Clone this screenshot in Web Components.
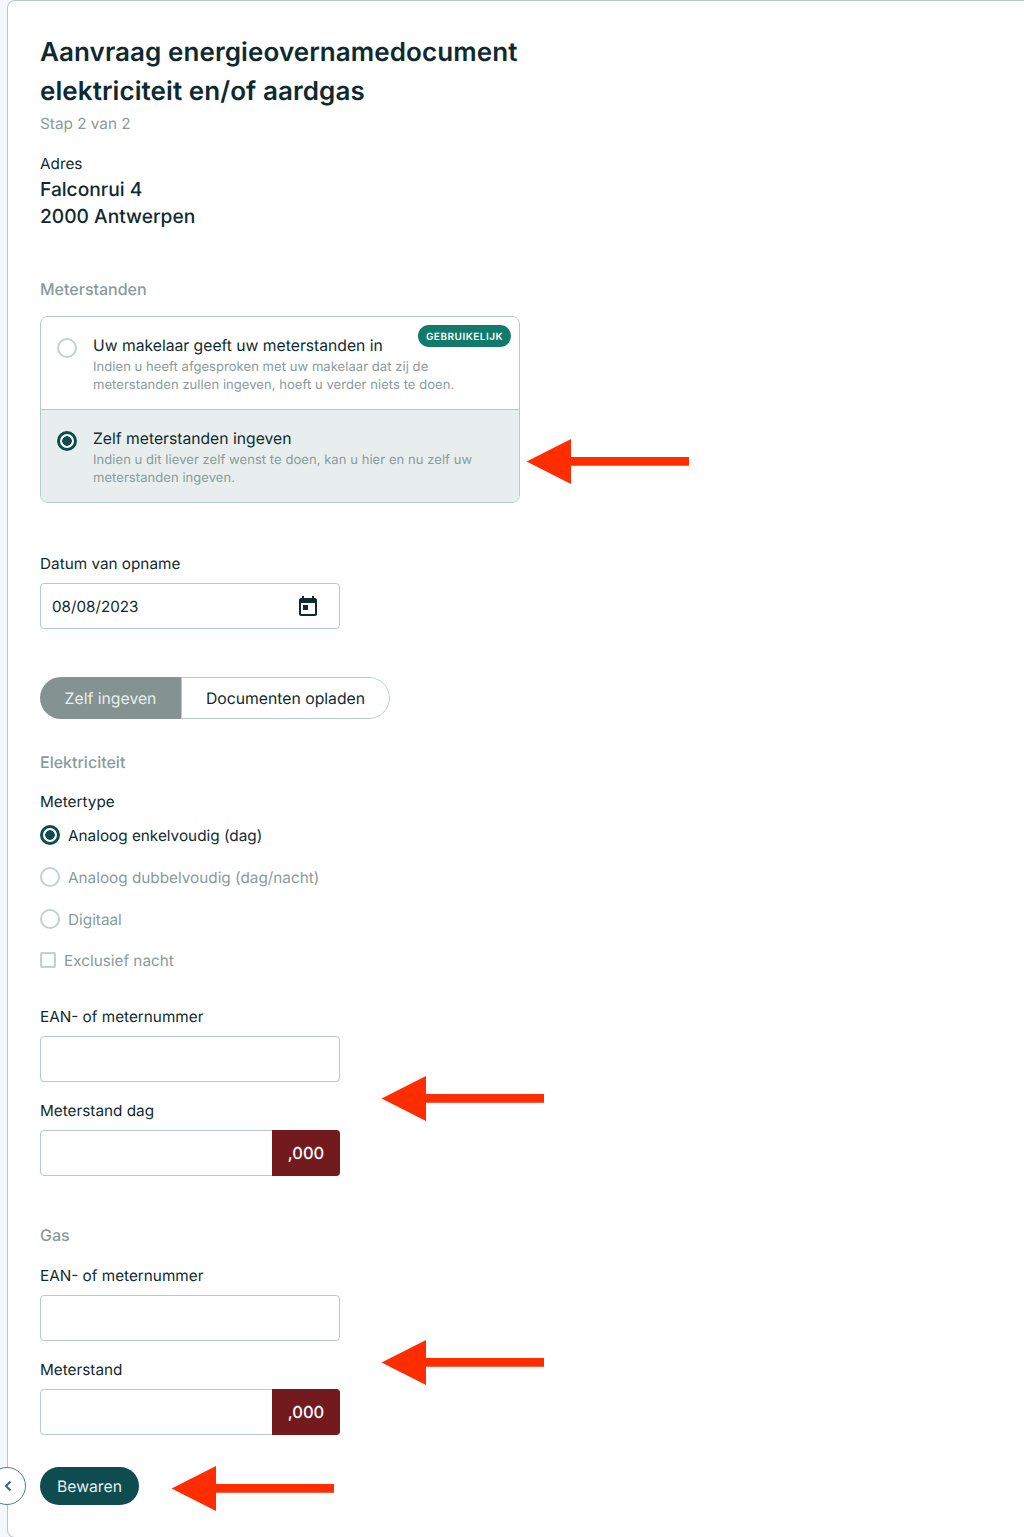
<!DOCTYPE html>
<html lang="nl">
<head>
<meta charset="utf-8">
<title>Aanvraag energieovernamedocument</title>
<style>
    html, body { margin: 0; padding: 0; background: #f5f7fd; overflow: hidden; }
    body { font-family: 'Inter', 'Liberation Sans', sans-serif; color: #0f2a2e; height: 1537px; text-rendering: geometricPrecision; }
</style>
</head>
<body>
<request-card>
    <page-title slot="head" step="Stap 2 van 2">Aanvraag energieovernamedocument<br>elektriciteit en/of aardgas</page-title>
    <address-block label="Adres">Falconrui 4<br>2000 Antwerpen</address-block>

    <section-label style="margin-top:47px">Meterstanden</section-label>
    <option-list style="margin-top:15px">
        <option-row badge="GEBRUIKELIJK" title="Uw makelaar geeft uw meterstanden in">Indien u heeft afgesproken met uw makelaar dat zij de meterstanden zullen ingeven, hoeft u verder niets te doen.</option-row>
        <option-row selected title="Zelf meterstanden ingeven">Indien u dit liever zelf wenst te doen, kan u hier en nu zelf uw meterstanden ingeven.</option-row>
    </option-list>

    <form-field style="margin-top:48px" label="Datum van opname" value="08/08/2023" calendar></form-field>

    <tab-switch style="margin-top:48px">
        <span slot="active">Zelf ingeven</span>
        <span slot="other">Documenten opladen</span>
    </tab-switch>

    <section-label style="margin-top:31px">Elektriciteit</section-label>
    <plain-label style="margin-top:15px">Metertype</plain-label>
    <radio-line style="margin-top:-1px" checked>Analoog enkelvoudig (dag)</radio-line>
    <radio-line>Analoog dubbelvoudig (dag/nacht)</radio-line>
    <radio-line>Digitaal</radio-line>
    <check-line style="margin-top:8px">Exclusief nacht</check-line>

    <form-field style="margin-top:32px" label="EAN- of meternummer"></form-field>
    <form-field style="margin-top:16px" label="Meterstand dag" suffix=",000"></form-field>

    <section-label style="margin-top:47px">Gas</section-label>
    <form-field style="margin-top:16px" label="EAN- of meternummer"></form-field>
    <form-field style="margin-top:16px" label="Meterstand" suffix=",000"></form-field>

    <save-button style="margin-top:32px">Bewaren</save-button>
    <back-button slot="overlay"></back-button>
</request-card>

<red-arrow x="527" y="438.5"></red-arrow>
<red-arrow x="382" y="1075.5"></red-arrow>
<red-arrow x="382" y="1339.5"></red-arrow>
<red-arrow x="172" y="1465.5"></red-arrow>

<script>
class RequestCard extends HTMLElement {
    constructor() {
        super();
        this.attachShadow({ mode: 'open' });
    }
    connectedCallback() {
        this.shadowRoot.innerHTML = `
            <style>
                :host {
                    display: block;
                    position: relative;
                    box-sizing: border-box;
                    margin-left: 7px;
                    height: 1538px;
                    padding: 32px 32px 30px 32px;
                    background: #fff;
                    border: 1px solid #b9c9ca;
                    border-right: 0;
                    border-radius: 8px 0 0 8px;
                }
            </style>
            <slot name="head"></slot>
            <slot></slot>
            <slot name="overlay"></slot>
        `;
    }
}

class PageTitle extends HTMLElement {
    constructor() {
        super();
        this.attachShadow({ mode: 'open' });
    }
    connectedCallback() {
        this.shadowRoot.innerHTML = `
            <style>
                :host { display: block; }
                h1 { margin: 0; font-size: 26px; letter-spacing: 0.08px; line-height: 39px; font-weight: 600; color: #0f2a2e; }
                p { margin: 0; font-size: 15.3px; line-height: 26px; color: #8a9a9b; }
            </style>
            <h1><slot></slot></h1>
            <p>${this.getAttribute('step')}</p>
        `;
    }
}

class AddressBlock extends HTMLElement {
    constructor() {
        super();
        this.attachShadow({ mode: 'open' });
    }
    connectedCallback() {
        this.shadowRoot.innerHTML = `
            <style>
                :host { display: block; margin-top: 14px; }
                .label { font-size: 15.3px; line-height: 25px; color: #0f2a2e; }
                .value { font-size: 19.2px; line-height: 27px; font-weight: 500; color: #0f2a2e; }
            </style>
            <div class="label">${this.getAttribute('label')}</div>
            <div class="value"><slot></slot></div>
        `;
    }
}

class SectionLabel extends HTMLElement {
    constructor() {
        super();
        this.attachShadow({ mode: 'open' });
        this.shadowRoot.innerHTML = `
            <style>
                :host { display: block; font-size: 16px; line-height: 24px; font-weight: 500; color: #8a9a9b; }
            </style>
            <slot></slot>
        `;
    }
}

class PlainLabel extends HTMLElement {
    constructor() {
        super();
        this.attachShadow({ mode: 'open' });
        this.shadowRoot.innerHTML = `
            <style>
                :host { display: block; font-size: 15.3px; line-height: 26px; color: #0f2a2e; }
            </style>
            <slot></slot>
        `;
    }
}

class OptionList extends HTMLElement {
    constructor() {
        super();
        this.attachShadow({ mode: 'open' });
        this.shadowRoot.innerHTML = `
            <style>
                :host {
                    display: flex;
                    flex-direction: column;
                    box-sizing: border-box;
                    width: 480px;
                    height: 187px;
                    border: 1px solid #b9c9ca;
                    border-radius: 8px;
                    overflow: hidden;
                }
            </style>
            <slot></slot>
        `;
    }
}

class OptionRow extends HTMLElement {
    constructor() {
        super();
        this.attachShadow({ mode: 'open' });
    }
    connectedCallback() {
        const selected = this.hasAttribute('selected');
        const badge = this.getAttribute('badge');
        this.shadowRoot.innerHTML = `
            <style>
                :host {
                    display: flex;
                    position: relative;
                    flex: 1;
                    box-sizing: border-box;
                    gap: 16px;
                    padding: 16px 40px 0 16px;
                    background: ${selected ? '#e8eeee' : '#fff'};
                }
                :host([selected]) { border-top: 1px solid #b9c9ca; }
                .dot {
                    flex: none;
                    box-sizing: border-box;
                    width: 20px;
                    height: 20px;
                    margin-top: 5px;
                    border-radius: 50%;
                    background: #fff;
                    border: 2px solid #c2d0d1;
                }
                :host([selected]) .dot {
                    border: 3px solid #0f4c50;
                    background: radial-gradient(circle, #0f4c50 0 4.5px, #fff 5px);
                    background-origin: border-box;
                }
                .title { font-size: 15.7px; line-height: 26px; color: #0f2a2e; }
                .desc { font-size: 13px; line-height: 18px; letter-spacing: 0.06px; color: #8a9a9b; margin-top: -1px; }
                .badge {
                    position: absolute;
                    top: 8px;
                    right: 8px;
                    height: 22px;
                    padding: 0 8px;
                    border-radius: 11px;
                    background: #127a6a;
                    color: #fff;
                    font-size: 10px;
                    line-height: 24px;
                    font-weight: 600;
                    letter-spacing: 0.5px;
                }
            </style>
            <span class="dot"></span>
            <div>
                <div class="title">${this.getAttribute('title')}</div>
                <div class="desc"><slot></slot></div>
            </div>
            ${badge ? `<span class="badge">${badge}</span>` : ''}
        `;
    }
}

class FormField extends HTMLElement {
    constructor() {
        super();
        this.attachShadow({ mode: 'open' });
    }
    connectedCallback() {
        const suffix = this.getAttribute('suffix');
        const value = this.getAttribute('value');
        const calendar = this.hasAttribute('calendar');
        this.shadowRoot.innerHTML = `
            <style>
                :host { display: block; width: 300px; }
                label { display: block; font-size: 15.3px; line-height: 26px; color: #0f2a2e; margin-bottom: 6px; }
                .box {
                    display: flex;
                    align-items: center;
                    box-sizing: border-box;
                    height: 46px;
                    background: #fff;
                    border: 1px solid #b9c9ca;
                    border-radius: 4px;
                }
                input { flex: 1; min-width: 0; height: 100%; border: 0; outline: 0; background: none; padding: 0 11px; }
                .value { flex: 1; padding-left: 11px; font-size: 15.2px; color: #0f2a2e; }
                svg { flex: none; margin-right: 19px; display: block; }
                .suffix {
                    flex: none;
                    align-self: stretch;
                    width: 68px;
                    margin: -1px -1px -1px 0;
                    display: flex;
                    align-items: center;
                    justify-content: center;
                    background: #731a1f;
                    border-radius: 0 4px 4px 0;
                    color: #fff;
                    font-size: 16.5px;
                    font-weight: 500;
                }
            </style>
            <label>${this.getAttribute('label')}</label>
            <div class="box">
                ${value ? `<span class="value">${value}</span>` : '<input type="text">'}
                ${calendar ? `<svg width="24" height="24" viewBox="0 0 24 24" fill="#0f2a2e"><path d="M19 4h-1V2h-2v2H8V2H6v2H5c-1.11 0-1.99.9-1.99 2L3 20a2 2 0 0 0 2 2h14c1.1 0 2-.9 2-2V6c0-1.1-.9-2-2-2zm0 16H5V9h14v11zM7 11h5v5H7z"/></svg>` : ''}
                ${suffix ? `<span class="suffix">${suffix}</span>` : ''}
            </div>
        `;
    }
}

class TabSwitch extends HTMLElement {
    constructor() {
        super();
        this.attachShadow({ mode: 'open' });
        this.shadowRoot.innerHTML = `
            <style>
                :host {
                    display: flex;
                    width: 350px;
                    height: 42px;
                    box-sizing: border-box;
                    font-size: 15.75px;
                    border-radius: 21px;
                    overflow: hidden;
                }
                .on {
                    width: 141px;
                    display: flex;
                    align-items: center;
                    justify-content: center;
                    background: #849292;
                    color: #e8eeee;
                }
                .off {
                    flex: 1;
                    display: flex;
                    align-items: center;
                    justify-content: center;
                    box-sizing: border-box;
                    border: 1px solid #b9c9ca;
                    border-radius: 0 21px 21px 0;
                    color: #0f2a2e;
                }
            </style>
            <div class="on"><slot name="active"></slot></div>
            <div class="off"><slot name="other"></slot></div>
        `;
    }
}

class RadioLine extends HTMLElement {
    constructor() {
        super();
        this.attachShadow({ mode: 'open' });
        this.shadowRoot.innerHTML = `
            <style>
                :host {
                    display: flex;
                    align-items: center;
                    gap: 8px;
                    height: 42px;
                    font-size: 15.3px;
                    color: #8a9a9b;
                }
                :host([checked]) { color: #0f2a2e; }
                .dot {
                    box-sizing: border-box;
                    width: 20px;
                    height: 20px;
                    border-radius: 50%;
                    border: 2px solid #c2d0d1;
                    background: #fff;
                }
                :host([checked]) .dot {
                    border: 3px solid #0f4c50;
                    background: radial-gradient(circle, #0f4c50 0 4.5px, #fff 5px);
                    background-origin: border-box;
                }
            </style>
            <span class="dot"></span>
            <span><slot></slot></span>
        `;
    }
}

class CheckLine extends HTMLElement {
    constructor() {
        super();
        this.attachShadow({ mode: 'open' });
        this.shadowRoot.innerHTML = `
            <style>
                :host {
                    display: flex;
                    align-items: center;
                    gap: 8px;
                    height: 24px;
                    font-size: 15.3px;
                    color: #8a9a9b;
                }
                .box {
                    box-sizing: border-box;
                    width: 16px;
                    height: 16px;
                    border: 2px solid #c2d0d1;
                    border-radius: 2px;
                }
            </style>
            <span class="box"></span>
            <span><slot></slot></span>
        `;
    }
}

class SaveButton extends HTMLElement {
    constructor() {
        super();
        this.attachShadow({ mode: 'open' });
        this.shadowRoot.innerHTML = `
            <style>
                :host {
                    display: flex;
                    align-items: center;
                    justify-content: center;
                    width: 99px;
                    height: 38px;
                    border-radius: 19px;
                    background: #0f4c50;
                    color: #e8eeee;
                    font-size: 15.7px;
                }
            </style>
            <slot></slot>
        `;
    }
}

class BackButton extends HTMLElement {
    constructor() {
        super();
        this.attachShadow({ mode: 'open' });
        this.shadowRoot.innerHTML = `
            <style>
                :host {
                    position: absolute;
                    left: -20px;
                    top: 1466px;
                    box-sizing: border-box;
                    width: 38px;
                    height: 38px;
                    border-radius: 50%;
                    border: 1px solid #4f7f82;
                    background: #fff;
                    display: flex;
                    align-items: center;
                    justify-content: center;
                }
                svg { margin-left: 1px; display: block; }
            </style>
            <svg width="10" height="12" viewBox="0 0 10 12" fill="none" stroke="#3f6468" stroke-width="2"><path d="M7.5 1.5 3 6l4.5 4.5"/></svg>
        `;
    }
}

class RedArrow extends HTMLElement {
    constructor() {
        super();
        this.attachShadow({ mode: 'open' });
    }
    connectedCallback() {
        this.shadowRoot.innerHTML = `
            <style>
                :host {
                    position: absolute;
                    left: ${this.getAttribute('x')}px;
                    top: ${this.getAttribute('y')}px;
                    width: 162px;
                    height: 45px;
                }
                svg { display: block; overflow: visible; }
            </style>
            <svg width="162" height="45" viewBox="0 0 162 45"><path fill="#ff2d00" d="M-.4 22.5 44 0V18H162V26.7H44V45Z"/></svg>
        `;
    }
}

customElements.define('request-card', RequestCard);
customElements.define('page-title', PageTitle);
customElements.define('address-block', AddressBlock);
customElements.define('section-label', SectionLabel);
customElements.define('plain-label', PlainLabel);
customElements.define('option-list', OptionList);
customElements.define('option-row', OptionRow);
customElements.define('form-field', FormField);
customElements.define('tab-switch', TabSwitch);
customElements.define('radio-line', RadioLine);
customElements.define('check-line', CheckLine);
customElements.define('save-button', SaveButton);
customElements.define('back-button', BackButton);
customElements.define('red-arrow', RedArrow);
</script>
</body>
</html>
